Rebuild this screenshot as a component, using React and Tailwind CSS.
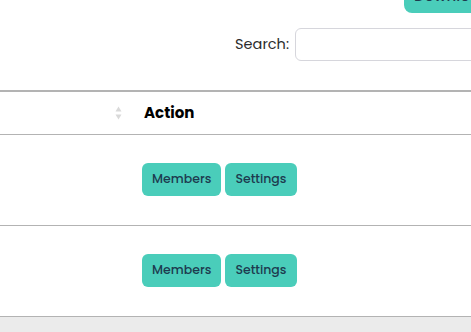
const rows = [1, 2]

function SortIcon() {
  return (
    <svg width="7" height="14" viewBox="0 0 7 14" className="shrink-0">
      <path d="M3.5 0.5 L6.5 5.5 L0.5 5.5 Z" fill="#d9d9d9" />
      <path d="M3.5 13.5 L6.5 8.5 L0.5 8.5 Z" fill="#d9d9d9" />
    </svg>
  )
}

function ActionButton({ children }) {
  return (
    <button className="h-[33px] px-[10px] rounded-[6px] bg-[#4acdba] text-[#1d3b4f] text-[12.5px] font-medium">
      {children}
    </button>
  )
}

export default function App() {
  return (
    <div className="w-[471px] h-[332px] overflow-hidden bg-[#ebebeb] font-['Poppins','Noto_Sans',sans-serif]">
      <div className="w-[540px] bg-white">
        <div className="flex justify-end pr-[40px]">
          <button className="-mt-[20px] h-[33px] w-[96px] rounded-[8px] bg-[#4acdba] text-[#1d3b4f] text-[15px] font-medium">
            Download
          </button>
        </div>

        <div className="flex items-center justify-end h-[33px] mt-[15px] pr-[10px]">
          <label className="text-[14.5px] text-[#2b2b2b] mr-[6px]">Search:</label>
          <input type="text" className="w-[235px] h-[33px] rounded-[6px] border border-[#d6d6dc] bg-white" />
        </div>

        <table className="mt-[29px] w-full border-collapse">
          <thead>
            <tr className="border-t-2 border-b border-[#b3b3b3]">
              <th className="w-[134px] h-[43px] pr-[12px]">
                <div className="flex justify-end">
                  <SortIcon />
                </div>
              </th>
              <th className="pl-[10px] text-left text-[15px] font-bold text-black">Action</th>
            </tr>
          </thead>
          <tbody>
            {rows.map((r) => (
              <tr key={r} className="border-b border-[#b3b3b3]">
                <td className="h-[91px]"></td>
                <td className="pl-[8px]">
                  <div className="flex gap-[4px]">
                    <ActionButton>Members</ActionButton>
                    <ActionButton>Settings</ActionButton>
                  </div>
                </td>
              </tr>
            ))}
          </tbody>
        </table>
      </div>
    </div>
  )
}
